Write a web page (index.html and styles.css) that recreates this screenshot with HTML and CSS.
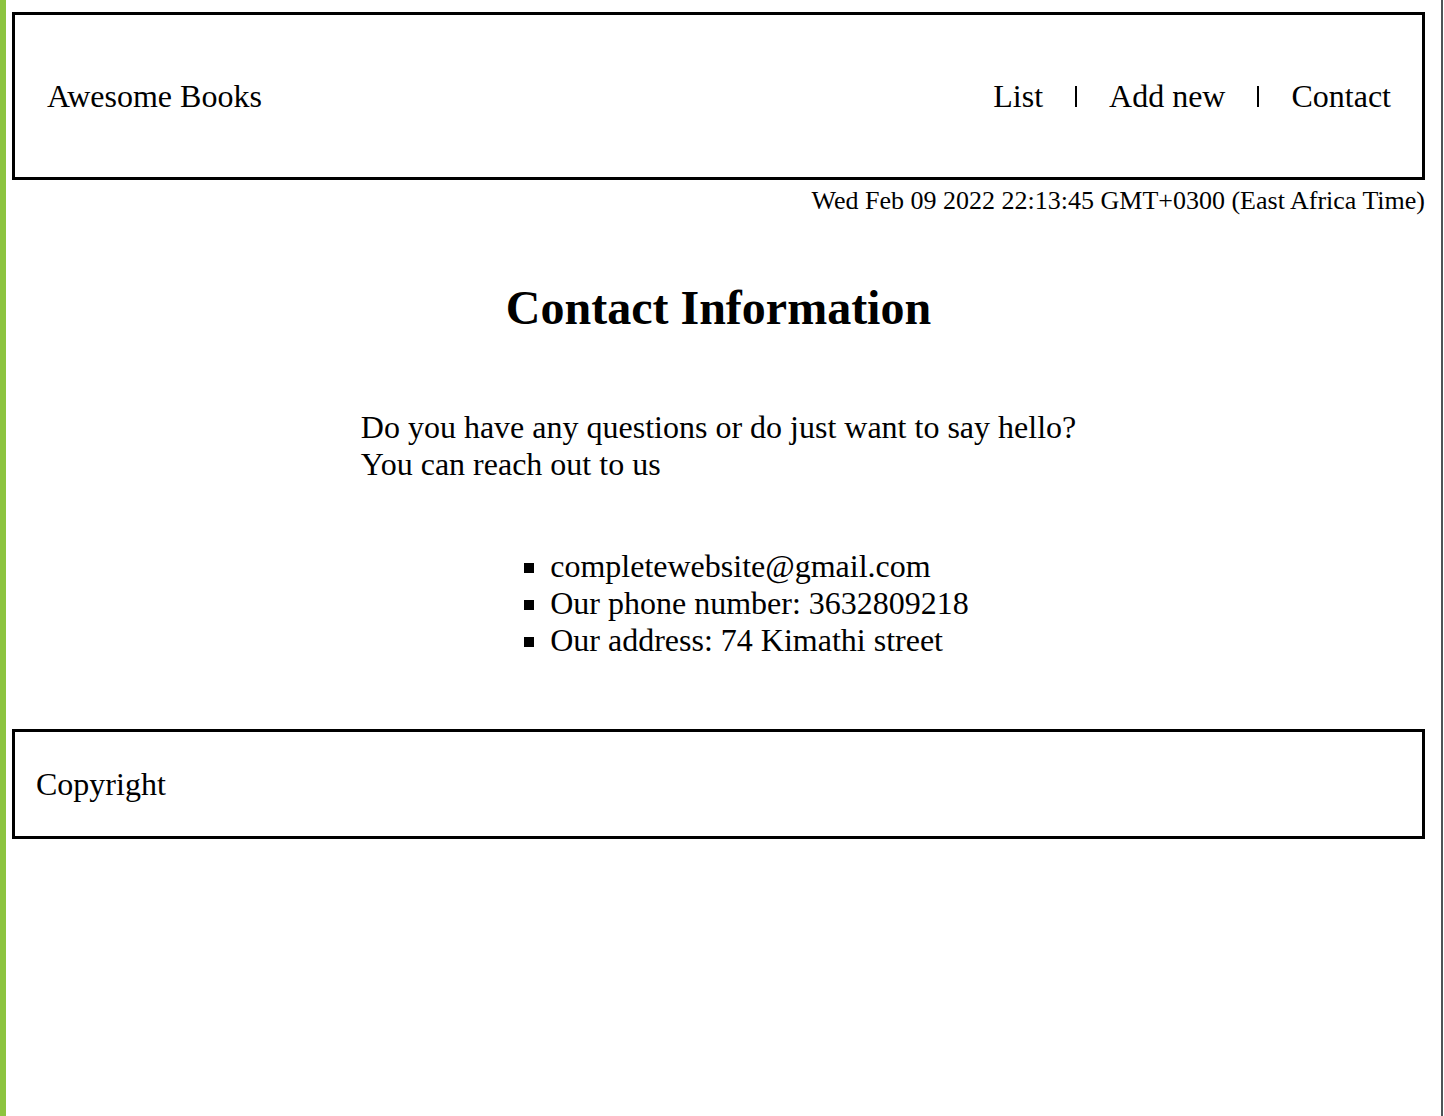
FILE: index.html
```html
<!DOCTYPE html>
<html lang="en">
<head>
<meta charset="utf-8">
<title>Awesome Books</title>
<link rel="stylesheet" href="styles.css">
</head>
<body>
<div class="page">
  <header class="header">
    <div class="logo">Awesome Books</div>
    <nav class="nav">
      <span class="nav-link">List</span>
      <span class="sep"></span>
      <span class="nav-link">Add new</span>
      <span class="sep"></span>
      <span class="nav-link">Contact</span>
    </nav>
  </header>
  <div class="date">Wed Feb 09 2022 22:13:45 GMT+0300 (East Africa Time)</div>
  <main class="contact">
    <h1 class="title">Contact Information</h1>
    <p class="intro">Do you have any questions or do just want to say hello?<br>You can reach out to us</p>
    <ul class="info">
      <li>completewebsite@gmail.com</li>
      <li>Our phone number: 3632809218</li>
      <li>Our address: 74 Kimathi street</li>
    </ul>
  </main>
  <footer class="footer">Copyright</footer>
</div>
</body>
</html>
```

FILE: styles.css
```css
html, body {
  margin: 0;
  padding: 0;
  background: #ffffff;
}

body {
  font-family: "Liberation Serif", "Times New Roman", serif;
  color: #000000;
  font-size: 32px;
}

.page {
  box-sizing: border-box;
  min-height: 100vh;
  margin-right: 1px;
  padding: 12px 16px 0 6px;
  border-left: 6px solid #8cc43f;
  border-right: 2px solid #4d5457;
}

.header {
  display: flex;
  align-items: center;
  justify-content: space-between;
  border: 3px solid #000;
  padding: 62.6px 31px 62.6px 32px;
  font-size: 32px;
}

.nav {
  display: flex;
  align-items: baseline;
  gap: 32px;
}

.sep {
  display: inline-block;
  width: 2px;
  height: 21px;
  background: #000;
}

.date {
  text-align: right;
  font-size: 26px;
  margin-top: 6px;
}

.contact {
  display: flex;
  flex-direction: column;
  align-items: center;
}

.title {
  font-size: 48px;
  font-weight: bold;
  margin: 63.4px 0 0 0;
}

.intro {
  margin: 74.6px 0 0 0;
  font-size: 32px;
}

.info {
  margin: 64.4px 0 0 0;
  padding-left: 82px;
  list-style-type: square;
}

.footer {
  margin-top: 70.6px;
  border: 3px solid #000;
  padding: 33.6px 21px;
}
```
